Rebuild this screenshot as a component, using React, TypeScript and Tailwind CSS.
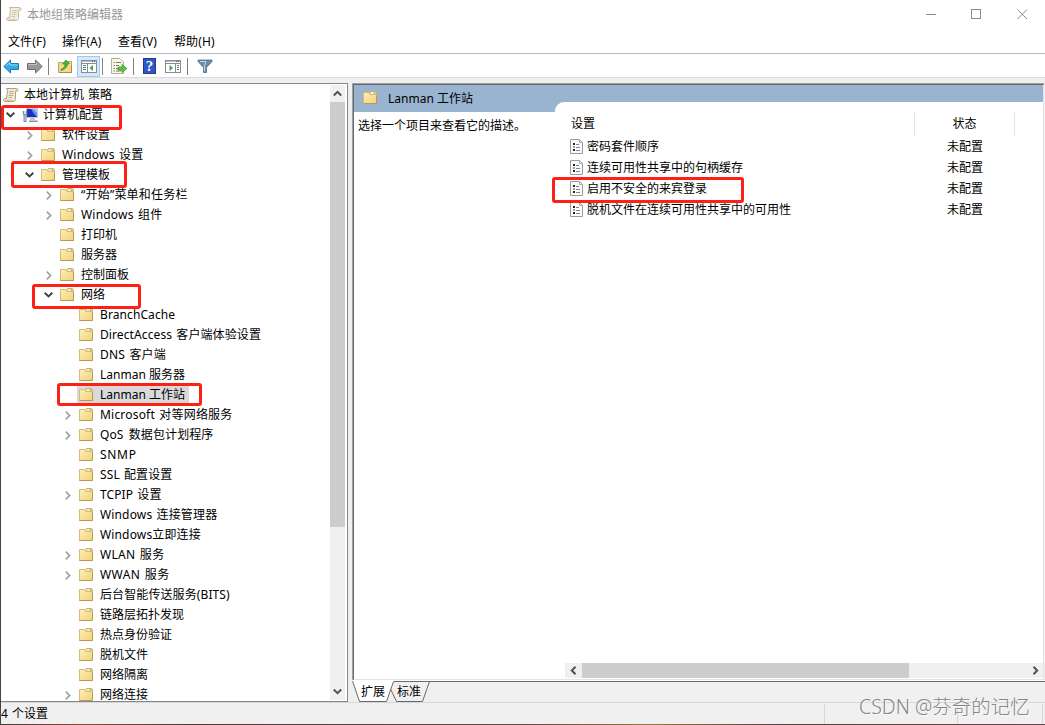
import type { ReactNode } from 'react';

type TreeNode = {
  label: string;
  level: number;
  state?: 'open' | 'closed';
  icon?: 'scroll' | 'computer';
  selected?: boolean;
  spacing?: string;
};

const treeNodes: TreeNode[] = [
  { label: '本地计算机 策略', level: 0, icon: 'scroll', spacing: '[word-spacing:1px]' },
  { label: '计算机配置', level: 1, state: 'open', icon: 'computer' },
  { label: '软件设置', level: 2, state: 'closed' },
  { label: 'Windows 设置', level: 2, state: 'closed', spacing: 'tracking-[0.2px] [word-spacing:1px]' },
  { label: '管理模板', level: 2, state: 'open' },
  { label: '“开始”菜单和任务栏', level: 3, state: 'closed', spacing: 'tracking-[0.2px]' },
  { label: 'Windows 组件', level: 3, state: 'closed', spacing: 'tracking-[0.2px] [word-spacing:1px]' },
  { label: '打印机', level: 3 },
  { label: '服务器', level: 3 },
  { label: '控制面板', level: 3, state: 'closed' },
  { label: '网络', level: 3, state: 'open' },
  { label: 'BranchCache', level: 4, spacing: 'tracking-[0.1px]' },
  { label: 'DirectAccess 客户端体验设置', level: 4, spacing: 'tracking-[0.1px] [word-spacing:1px]' },
  { label: 'DNS 客户端', level: 4, spacing: 'tracking-[0.2px] [word-spacing:1px]' },
  { label: 'Lanman 服务器', level: 4 },
  { label: 'Lanman 工作站', level: 4, selected: true },
  { label: 'Microsoft 对等网络服务', level: 4, state: 'closed', spacing: 'tracking-[0.2px] [word-spacing:1px]' },
  { label: 'QoS 数据包计划程序', level: 4, state: 'closed', spacing: 'tracking-[0.1px] [word-spacing:2px]' },
  { label: 'SNMP', level: 4, spacing: 'tracking-[0.7px]' },
  { label: 'SSL 配置设置', level: 4, spacing: 'tracking-[0.1px] [word-spacing:1px]' },
  { label: 'TCPIP 设置', level: 4, state: 'closed', spacing: 'tracking-[0.1px] [word-spacing:1px]' },
  { label: 'Windows 连接管理器', level: 4, spacing: 'tracking-[0.15px] [word-spacing:1px]' },
  { label: 'Windows立即连接', level: 4, spacing: 'tracking-[0.15px]' },
  { label: 'WLAN 服务', level: 4, state: 'closed', spacing: 'tracking-[0.3px] [word-spacing:1px]' },
  { label: 'WWAN 服务', level: 4, state: 'closed', spacing: 'tracking-[0.4px] [word-spacing:1px]' },
  { label: '后台智能传送服务(BITS)', level: 4, spacing: 'tracking-[0.1px]' },
  { label: '链路层拓扑发现', level: 4 },
  { label: '热点身份验证', level: 4 },
  { label: '脱机文件', level: 4 },
  { label: '网络隔离', level: 4 },
  { label: '网络连接', level: 4, state: 'closed' },
];

const settings = [
  { name: '密码套件顺序', status: '未配置' },
  { name: '连续可用性共享中的句柄缓存', status: '未配置' },
  { name: '启用不安全的来宾登录', status: '未配置' },
  { name: '脱机文件在连续可用性共享中的可用性', status: '未配置' },
];

const menus = ['文件(F)', '操作(A)', '查看(V)', '帮助(H)'];

const indent = ['pl-0', 'pl-[2px]', 'pl-[21px]', 'pl-[40px]', 'pl-[59px]'];

function FolderIcon() {
  return (
    <svg width="15" height="15" viewBox="0 0 15 15" className="block shrink-0">
      <defs>
        <linearGradient id="folder" x1="0" y1="0" x2="1" y2="1">
          <stop offset="0" stopColor="#fdeeb8" />
          <stop offset="1" stopColor="#f3d27c" />
        </linearGradient>
      </defs>
      <path d="M6.500 4V2.500L7.500 .5H12.500L13.500 1.500V5" fill="#f5dd94" stroke="#cdae62" />
      <path d="M8 2H11" stroke="#fff" />
      <path d="M10.500 2H12.500" stroke="#5aa7e6" />
      <path d="M.5 12.500V1.500H5.500L7 3.500H13.500V12.500Z" fill="url(#folder)" stroke="#d9bb70" />
      <path d="M.5 12.500H13.500V4" fill="none" stroke="#b99a50" />
    </svg>
  );
}

function ScrollIcon({ faded = false }: { faded?: boolean }) {
  return (
    <svg width="16" height="16" viewBox="0 0 16 16" className={`block shrink-0 ${faded ? 'opacity-75' : ''}`}>
      <path d="M3.500 1.500H13.500C15.500 1.500 15.500 4.500 13.500 4.500H12.500V11.500C12.500 13.500 11.500 14.500 10 14.500H2C0 14.500 0 11.500 2 11.500H3.500L4.500 3.500Z" fill="#f3ecd0" stroke="#aaa084" />
      <path d="M12.500 4.500V2.500H14.500V4.500Z" fill="#cfc4a2" />
      <path d="M2 12.500H9.500V14H2Z" fill="#d6ccac" />
      <path d="M6 4.500H11M6 6.500H10.500M5.500 8.500H10.500M5.500 10.500H9" stroke="#a9a18a" strokeWidth=".8" />
    </svg>
  );
}

function ComputerIcon() {
  return (
    <svg width="17" height="15" viewBox="0 0 17 15" className="block shrink-0">
      <rect x="4.500" y=".5" width="11" height="9" fill="#1c2fc0" stroke="#c3c8d2" />
      <path d="M9 1H15V9L12 6Z" fill="#5f8cf0" />
      <path d="M11 1H15V5Z" fill="#a5c2fa" />
      <path d="M8 10H13V12H15.500V14H7V12H8Z" fill="#c3c7cf" />
      <path d="M7 13.500H15.500" stroke="#8c919c" />
      <path d="M1.500 3V6L3 7.500L4.500 6V3" fill="none" stroke="#7991a8" strokeWidth="1.500" />
      <path d="M3 7V14" stroke="#7890a8" strokeWidth="3" />
      <path d="M3 7.500V13" stroke="#c4d7e6" />
    </svg>
  );
}

function SettingIcon() {
  return (
    <svg width="13" height="15" viewBox="0 0 13 15" className="block shrink-0">
      <path d="M.5 .5H9.500L12.500 3.500V14.500H.5Z" fill="#fcfcfc" stroke="#9a9a9a" />
      <path d="M9.500 .5V3.500H12.500" fill="none" stroke="#b0b0b0" />
      <path d="M3 4H5V6H3ZM3 10H5V12H3Z" fill="#222" />
      <path d="M3 7H5V9H3Z" fill="#9a9ab0" />
      <path d="M6 5.500H9M6 8.500H10M6 11.500H10" stroke="#8080a0" />
    </svg>
  );
}

function Chevron({ open }: { open: boolean }) {
  return open ? (
    <svg width="9" height="6" viewBox="0 0 9 6" className="mr-[2px] block">
      <path d="M.7 .8L4.500 4.500L8.300 .8" fill="none" stroke="#404040" strokeWidth="1.900" />
    </svg>
  ) : (
    <svg width="6" height="9" viewBox="0 0 6 9" className="block">
      <path d="M.8 .7L4.600 4.500L.8 8.300" fill="none" stroke="#a6a6a6" strokeWidth="1.800" />
    </svg>
  );
}

function ScrollArrow({ d }: { d: string }) {
  return (
    <svg width="9" height="9" viewBox="0 0 9 9" className="block">
      <path d={d} fill="none" stroke="#505050" strokeWidth="2" />
    </svg>
  );
}

function TitleBar() {
  return (
    <div className="flex h-[28px] items-center pl-[5px]">
      <ScrollIcon faded />
      <span className="ml-[5px] pt-[2px] text-[#999]">本地组策略编辑器</span>
      <svg width="104" height="12" viewBox="0 0 104 12" className="mr-[15px] ml-auto block" fill="none" stroke="#8c8c8c">
        <path d="M0 6.500H10" />
        <rect x="45.500" y="1.500" width="9" height="9" />
        <path d="M91.500 1.500L101 11M101 1.500L91.500 11" />
      </svg>
    </div>
  );
}

function MenuBar() {
  return (
    <div className="flex h-[25px] items-center pt-[2px] pl-[7px]">
      {menus.map((menu) => (
        <span key={menu} className="w-[56px] tracking-[0.1px] first:w-[54px]">
          {menu}
        </span>
      ))}
    </div>
  );
}

function Separator() {
  return <div className="h-[17px] w-px bg-[#808080]" />;
}

function PanelIcon({ flip = false }: { flip?: boolean }) {
  return (
    <svg width="16" height="13" viewBox="0 0 16 13" className="block">
      <rect x=".5" y=".5" width="15" height="12" fill="#fff" stroke="#868d96" />
      <path d="M1 1.500H15" stroke="#b9bec5" />
      <path d="M1 3.500H15" stroke="#868d96" />
      <path d="M11 1.500H12M13 1.500H14" stroke="#4d545e" />
      {flip ? (
        <>
          <path d="M10.500 4V12" stroke="#868d96" />
          <path d="M12 5.500H14M12 7.500H14M12 9.500H14" stroke="#6c7580" />
          <path d="M4.500 5V11L8 8Z" fill="#3ca53c" />
        </>
      ) : (
        <>
          <path d="M6.500 4V12" stroke="#868d96" />
          <path d="M2 5.500H5M2 7.500H5M2 9.500H5" stroke="#6c7580" />
          <path d="M12 5V11L8.500 8Z" fill="#3ca53c" />
        </>
      )}
    </svg>
  );
}

function Toolbar() {
  return (
    <div className="flex h-[24px] items-center border-t border-[#b4b8c0] pt-px pl-[2px]">
      <svg width="17" height="15" viewBox="0 0 17 15">
        <path d="M.8 7.500L7.500 1V4.500H15.500V10.500H7.500V14Z" fill="#35a9e8" stroke="#1878b8" />
        <path d="M3 7L7 3.500V6H14.500" fill="none" stroke="#8fdcfa" />
      </svg>
      <svg width="17" height="15" viewBox="0 0 17 15" className="ml-[6px]">
        <path d="M16.200 7.500L9.500 1V4.500H1.500V10.500H9.500V14Z" fill="#999" stroke="#6e6e6e" />
        <path d="M2.500 5.500H10.500V3.500" fill="none" stroke="#c4c4c4" />
      </svg>
      <div className="ml-[5px]">
        <Separator />
      </div>
      <svg width="15" height="15" viewBox="0 0 15 15" className="ml-[9px]">
        <path d="M.5 13.500V3.500H5L6.500 5H8L9 2.500H13.500V13.500Z" fill="#f5d98b" stroke="#c9a350" />
        <path d="M1 13.500H13.500V6" fill="none" stroke="#a98c48" />
        <path d="M3 10.500C6 9.500 7 7 7 5H4.500L8 1L11.500 4.500L9.500 5C9.500 8 6.500 10.500 3 11.500Z" fill="#43b834" stroke="#278a20" strokeWidth=".6" />
      </svg>
      <div className="ml-[4px] flex h-[21px] w-[23px] items-center justify-center border border-[#9ccbf0] bg-[#d4eafb]">
        <PanelIcon />
      </div>
      <div className="ml-[2px]">
        <Separator />
      </div>
      <svg width="17" height="17" viewBox="0 0 17 17" className="ml-[8px]">
        <path d="M.5 .5H9L12.500 4V15.500H.5Z" fill="#fbf7e4" stroke="#b5b09a" />
        <path d="M2.500 4.500H4M5 4.500H10M2.500 7.500H4M5 7.500H8M2.500 10.500H4M5 10.500H7M2.500 13H4M5 13H10" stroke="#777" />
        <path d="M7 9H11V6.500L16 10.500L11 14.500V12H7Z" fill="#59c446" stroke="#38952d" strokeWidth=".7" />
      </svg>
      <div className="ml-[5px]">
        <Separator />
      </div>
      <div className="ml-[9px] flex h-[16px] w-[13px] items-center justify-center border border-[#223a90] bg-[#3157c6] font-['Liberation_Serif',serif] text-[15px] leading-none font-bold text-white">
        ?
      </div>
      <div className="ml-[9px]">
        <PanelIcon flip />
      </div>
      <div className="ml-[6px]">
        <Separator />
      </div>
      <svg width="16" height="15" viewBox="0 0 16 15" className="ml-[9px]">
        <path d="M1 1H15V2.500L9.500 8.500V13.500H6.500V8.500L1 2.500Z" fill="#6c8da8" stroke="#506b80" strokeWidth=".8" />
        <path d="M3 2.500H9L7.500 7V12" fill="none" stroke="#c8d9e5" />
      </svg>
    </div>
  );
}

function TreeRow({ node }: { node: TreeNode }) {
  let icon: ReactNode = <FolderIcon />;
  if (node.icon === 'scroll') icon = <ScrollIcon />;
  if (node.icon === 'computer') icon = <ComputerIcon />;

  return (
    <div className={`flex h-[20px] shrink-0 items-center ${indent[node.level]}`}>
      {node.level > 0 && (
        <div className="flex w-[17px] shrink-0 justify-center pr-px">
          {node.state && <Chevron open={node.state === 'open'} />}
        </div>
      )}
      <div
        className={`flex h-[20px] items-center whitespace-nowrap ${node.level > 0 ? 'pl-[2px]' : 'pl-[2px]'} ${
          node.selected ? 'bg-[#d9d9d9]' : ''
        }`}
      >
        <div className={node.level > 0 ? 'w-[20px]' : 'w-[20px]'}>{icon}</div>
        <span className={`pr-[4px] pl-px ${node.spacing ?? ''}`}>{node.label}</span>
      </div>
    </div>
  );
}

function TreePane() {
  return (
    <div className="flex w-[347px] border-t border-r border-b border-[#828790] bg-white">
      <div className="flex min-w-0 flex-1 flex-col overflow-hidden pt-px">
        {treeNodes.map((node) => (
          <TreeRow key={node.label} node={node} />
        ))}
      </div>
      <div className="mt-px mr-[2px] mb-px flex w-[15px] flex-col items-center bg-[#f0f0f0]">
        <div className="flex h-[17px] items-center">
          <ScrollArrow d="M.8 6.500L4.500 2.800L8.200 6.500" />
        </div>
        <div className="h-[425px] w-[15px] bg-[#cdcdcd]" />
        <div className="mt-auto flex h-[17px] items-center">
          <ScrollArrow d="M.8 2.500L4.500 6.200L8.200 2.500" />
        </div>
      </div>
    </div>
  );
}

function SettingsList() {
  return (
    <div className="flex h-full flex-col rounded-tl-[9px] bg-white pt-[9px]">
      <div className="flex h-[25px] items-center">
        <div className="w-[359px] pl-[16px]">设置</div>
        <div className="flex h-[24px] w-[101px] items-center justify-center border-r border-l border-[#e2e2e2]">状态</div>
      </div>
      {settings.map((item) => (
        <div key={item.name} className="flex h-[21px] items-center pl-[15px]">
          <SettingIcon />
          <span className="w-[364px] pl-[4px]">{item.name}</span>
          <span>{item.status}</span>
        </div>
      ))}
      <div className="mt-auto mb-px ml-[10px] flex h-[15px] items-center bg-[#f0f0f0]">
        <div className="flex w-[17px] justify-center">
          <ScrollArrow d="M6.500 .8L2.800 4.500L6.500 8.200" />
        </div>
        <div className="h-full w-[327px] bg-[#cdcdcd]" />
        <div className="mr-[3px] ml-auto">
          <ScrollArrow d="M2.500 .8L6.200 4.500L2.500 8.200" />
        </div>
      </div>
    </div>
  );
}

function DetailPane() {
  return (
    <div className="flex min-w-0 flex-1 flex-col">
      <div className="mr-px flex h-[597px] flex-col border-t border-l border-[#a0a0a0]">
        <div className="flex h-full flex-col border-t border-r border-b border-l border-t-[#696969] border-r-[#e3e3e3] border-b-[#e3e3e3] border-l-[#696969] bg-white">
          <div className="flex h-full">
            <div className="w-[201px]">
              <div className="flex h-[27px] items-center bg-[#99b4d1] pl-[9px]">
                <FolderIcon />
                <span className="pl-[10px] whitespace-nowrap">Lanman 工作站</span>
              </div>
              <p className="pt-[5px] pl-[4px] leading-[18px] whitespace-nowrap">选择一个项目来查看它的描述。</p>
            </div>
            <div className="flex min-w-0 flex-1 flex-col">
              <div className="h-[17px] bg-[#99b4d1]" />
              <div className="min-h-0 flex-1 bg-[linear-gradient(#99b4d1_10px,#fff_10px)]">
                <SettingsList />
              </div>
            </div>
          </div>
        </div>
      </div>
      <div className="h-px bg-white" />
      <div className="flex h-[21px] border-t border-[#696969]">
        <div className="relative -mt-px h-[21px] w-[80px]">
          <svg width="80" height="21" viewBox="0 0 80 21" className="absolute inset-0">
            <path d="M37 .5H77.500L70.500 20.500H44.500L39 9Z" fill="#f0f0f0" stroke="#696969" />
            <path d="M0 0H42L35 20.500H8Z" fill="#fff" />
            <path d="M.5 0L7.500 20.500H34.500L41.500 .5" fill="none" stroke="#696969" />
          </svg>
          <div className="relative flex h-full items-center pl-[9px]">
            <span className="w-[36px]">扩展</span>
            <span>标准</span>
          </div>
        </div>
      </div>
    </div>
  );
}

function StatusBar() {
  return (
    <div className="flex h-[22px] border-t border-[#d7d7d7] bg-[#f0f0f0]">
      <div className="flex-1 leading-[22px] [word-spacing:1px]">4 个设置</div>
      <div className="mt-px h-[20px] w-[133px] border-l border-[#d7d7d7]" />
      <div className="mt-px h-[20px] w-[85px] border-l border-[#d7d7d7]" />
      <div className="mt-px h-[20px] w-[3px] border-l border-[#d7d7d7]" />
    </div>
  );
}

function Highlight({ className }: { className: string }) {
  return <div className={`absolute rounded-[3px] border-[3px] border-[#ff2015] ${className}`} />;
}

export default function App() {
  return (
    <div className="relative flex h-[725px] w-[1045px] flex-col overflow-hidden border-l border-[#454545] bg-white font-['Noto_Sans','Noto_Sans_CJK_SC',sans-serif] text-[12px] leading-none text-black">
      <TitleBar />
      <MenuBar />
      <Toolbar />
      <div className="flex h-[625px] flex-col border-t border-[#dadada] bg-[#f0f0f0] pt-[5px]">
        <div className="flex h-[619px] gap-[4px]">
          <TreePane />
          <DetailPane />
        </div>
      </div>
      <StatusBar />
      <div className="h-px bg-[linear-gradient(90deg,#49373c,#8b4c36_8%,#51353b_18%,#694744_50%,#987344_62%,#573e43_75%,#63484b)]" />

      <Highlight className="top-[105px] left-0 h-[25px] w-[121px]" />
      <Highlight className="top-[161px] left-[10px] h-[27px] w-[116px]" />
      <Highlight className="top-[284px] left-[31px] h-[25px] w-[109px]" />
      <Highlight className="top-[383px] left-[56px] h-[23px] w-[145px]" />
      <Highlight className="top-[177px] left-[551px] h-[26px] w-[192px]" />

      <div className="absolute top-[695px] left-[858px] text-[19.5px] leading-[24px] font-light whitespace-nowrap text-[#858585] [text-shadow:1px_1px_0_#ffffffb0]">
        CSDN @芬奇的记忆
      </div>
    </div>
  );
}
